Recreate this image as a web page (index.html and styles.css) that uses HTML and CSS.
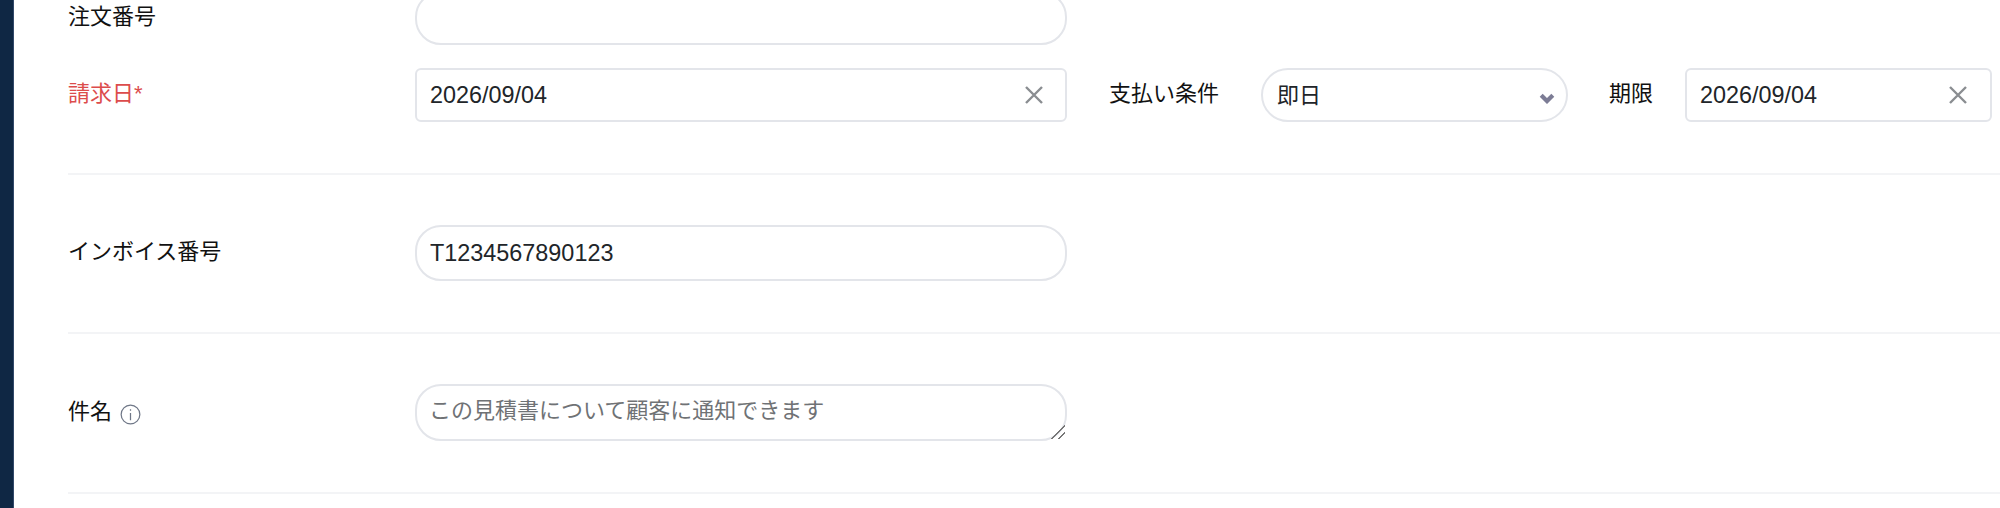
FILE: index.html
```html
<!DOCTYPE html>
<html lang="ja">
<head>
<meta charset="utf-8">
<title>請求書</title>
<link rel="stylesheet" href="styles.css">
</head>
<body>
<div class="layout">
  <aside class="sidebar"></aside>
  <main class="form">
    <section class="group group-top">
      <div class="row row-order">
        <label class="label">注文番号</label>
        <input class="field pill wide" type="text">
      </div>
      <div class="row row-date">
        <label class="label required">請求日*</label>
        <div class="control wide">
          <input class="field box latin" type="text" value="2026/09/04">
          <button class="clear" type="button" aria-label="clear"><svg viewBox="0 0 18 18"><path d="M1 1 17 17M17 1 1 17"/></svg></button>
        </div>
        <label class="inline-label terms-label">支払い条件</label>
        <div class="control terms">
          <select class="field pill select"><option>即日</option></select>
          <svg class="chevron" viewBox="0 0 16 11"><path d="M2.2 2.2 8 8l5.8-5.8"/></svg>
        </div>
        <label class="inline-label due-label">期限</label>
        <div class="control due">
          <input class="field box latin" type="text" value="2026/09/04">
          <button class="clear clear-due" type="button" aria-label="clear"><svg viewBox="0 0 18 18"><path d="M1 1 17 17M17 1 1 17"/></svg></button>
        </div>
      </div>
    </section>
    <section class="group">
      <div class="row">
        <label class="label">インボイス番号</label>
        <input class="field pill wide latin" type="text" value="T1234567890123">
      </div>
    </section>
    <section class="group">
      <div class="row">
        <label class="label label-subject">件名<svg class="info" viewBox="0 0 22 22"><circle cx="11" cy="11" r="9.8"/><path d="M11 9.5v7.5M11 5.4v1.8"/></svg></label>
        <textarea class="field pill wide subject" placeholder="この見積書について顧客に通知できます"></textarea>
      </div>
    </section>
  </main>
</div>
</body>
</html>
```
FILE: styles.css
```css
* { box-sizing: border-box; }
html, body { margin: 0; height: 100%; overflow: hidden; background: #fff; }
body { font-family: "Liberation Sans", "Noto Sans CJK JP", sans-serif; font-size: 22px; color: #111; }
.layout { display: flex; height: 508px; }
.sidebar { width: 14px; flex: none; background: #0f2744; border-right: 1px solid #33496a; }
.form { flex: 1; padding-left: 54px; margin-top: -9px; min-width: 0; }
.group { border-bottom: 2px solid #f3f4f6; padding: 50px 0 51px; }
.group-top { padding-top: 0; display: flex; flex-direction: column; gap: 23px; }
.row { display: flex; align-items: center; }
.label { width: 347px; flex: none; display: flex; align-items: center; line-height: 30px; margin-top: -3px; }
.label-subject { margin-top: -1px; }
.required { color: #dc4c4c; }
.wide { width: 652px; flex: none; }
.field { display: block; font: inherit; font-size: 22px; color: #212529; background: #fff; border: 2px solid #e3e5ea; outline: none; margin: 0; }
.latin { font-size: 23.4px; }
.pill { border-radius: 26px; padding: 0 13px; height: 56px; }
.row-order .field { height: 54px; }
.box { border-radius: 6px; padding: 0 13px; height: 54px; width: 100%; }
.control { position: relative; flex: none; }
.clear { position: absolute; right: 24px; top: 18px; width: 18px; height: 18px; padding: 0; border: 0; background: none; }
.clear-due { right: 25px; }
.clear svg { display: block; width: 18px; height: 18px; fill: none; stroke: #8a8d91; stroke-width: 2.4; }
.inline-label { flex: none; line-height: 30px; margin-top: -3px; }
.terms-label { margin-left: 42px; width: 152px; }
.terms { width: 307px; }
.select { width: 100%; height: 54px; padding-left: 14px; appearance: none; -webkit-appearance: none; border-radius: 27px; }
.chevron { position: absolute; right: 13px; top: 25px; width: 16px; height: 11px; fill: none; stroke: #7c7c95; stroke-width: 4.2; }
.due-label { margin-left: 41px; width: 76px; }
.due { width: 307px; }
.info { width: 21px; height: 21px; margin-left: 8px; margin-top: 5px; fill: none; stroke: #6f7787; stroke-width: 1.3; }
.subject { height: 57px; padding: 10px 12px 6px; resize: vertical; line-height: 30px; overflow: hidden; }
.subject::placeholder { color: #6f7275; opacity: 1; }
.subject::-webkit-resizer { background: linear-gradient(135deg, transparent 52%, #777 52%, #777 60%, transparent 60%, transparent 74%, #777 74%, #777 82%, transparent 82%); }
```
